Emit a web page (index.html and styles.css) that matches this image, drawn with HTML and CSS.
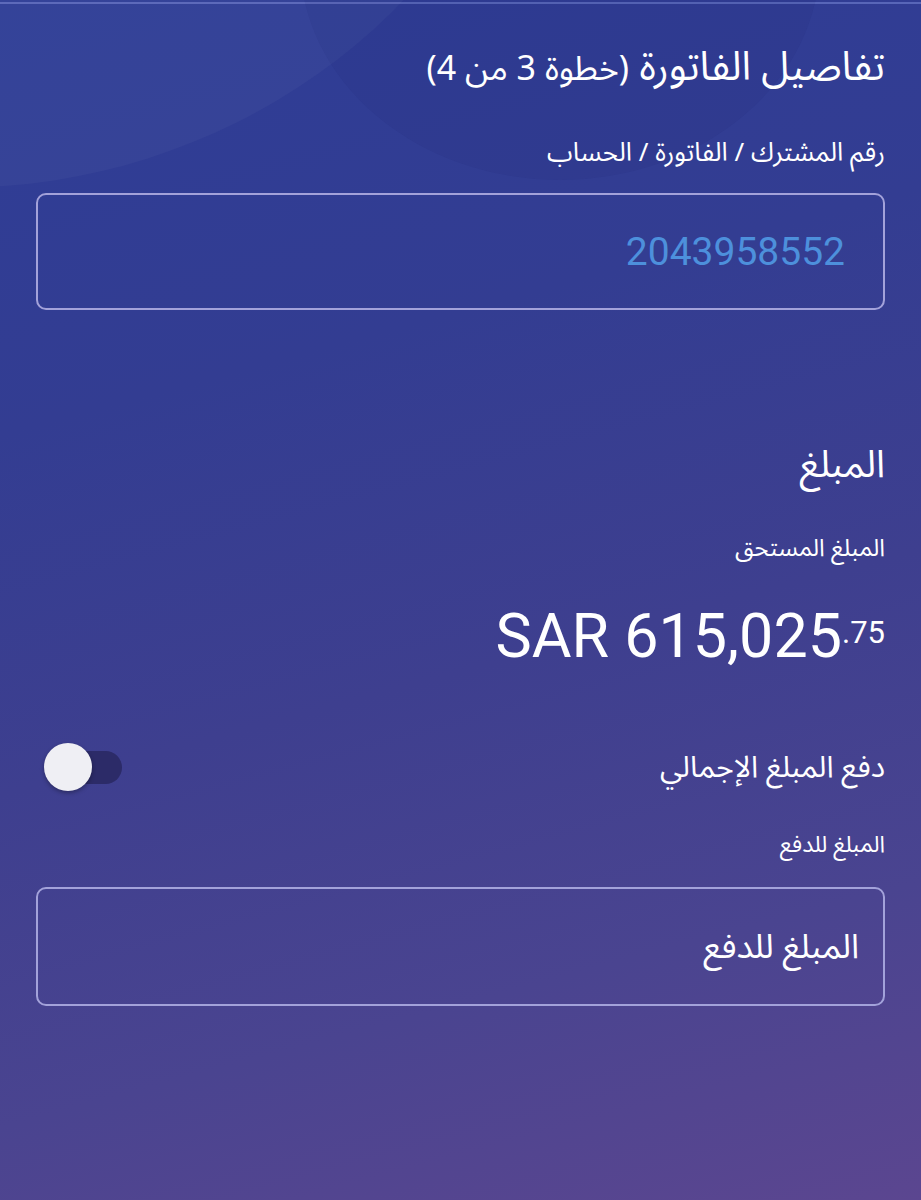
FILE: index.html
```html
<!DOCTYPE html>
<html lang="ar" dir="rtl">
<head>
<meta charset="utf-8">
<link rel="stylesheet" href="styles.css">
</head>
<body>
<div class="screen">
  <div class="topline"></div>
  <div class="glow"></div>
  <div class="glow2"></div>
  <main class="content">
    <h1 class="title">تفاصيل الفاتورة <span class="step">(خطوة 3 من 4)</span></h1>
    <div class="label label-first">رقم المشترك / الفاتورة / الحساب</div>
    <div class="field field-account"><span class="field-value">2043958552</span></div>

    <h2 class="section">المبلغ</h2>
    <div class="label label-due">المبلغ المستحق</div>
    <div class="amount" dir="ltr"><span class="amount-main">SAR 615,025</span><span class="amount-dec">.75</span></div>

    <div class="toggle-row">
      <span class="toggle-label">دفع المبلغ الإجمالي</span>
      <span class="switch"><span class="track"></span><span class="knob"></span></span>
    </div>
    <div class="label label-pay">المبلغ للدفع</div>
    <div class="field field-pay"><span class="placeholder">المبلغ للدفع</span></div>
  </main>
</div>
</body>
</html>
```

FILE: styles.css
```css
html, body {
  margin: 0;
  padding: 0;
}
body {
  width: 921px;
  height: 1200px;
  overflow: hidden;
  font-family: "Noto Sans Arabic", "Noto Naskh Arabic", "DejaVu Sans", "Noto Sans", sans-serif;
  color: #ffffff;
}
.screen {
  position: relative;
  width: 921px;
  height: 1200px;
  overflow: hidden;
  background: linear-gradient(165deg, #2e3d96 0%, #333d92 30%, #3e3f8f 55%, #4a4490 78%, #5b4690 100%);
}
.topline {
  position: absolute;
  top: 2px;
  left: 0;
  right: 0;
  height: 2px;
  background: #5866b8;
}
.glow {
  position: absolute;
  top: -590px;
  left: -440px;
  width: 980px;
  height: 760px;
  border-radius: 50%;
  background: rgba(255, 255, 255, 0.03);
  transform: rotate(-22deg);
}
.glow2 {
  position: absolute;
  top: -260px;
  left: 300px;
  width: 520px;
  height: 440px;
  border-radius: 50%;
  background: rgba(20, 20, 90, 0.06);
}
.content {
  position: relative;
  padding: 0 36px;
  display: flex;
  flex-direction: column;
}
.content > * {
  flex-shrink: 0;
}
.title {
  margin: 43px 0 0;
  font-size: 40px;
  font-weight: 400;
  line-height: 50px;
  height: 50px;
  white-space: nowrap;
}
.step {
  font-size: 34px;
}
.label {
  font-size: 24px;
  line-height: 34px;
  height: 34px;
}
.label-first {
  margin-top: 42px;
  font-size: 26px;
  height: 36px;
  line-height: 36px;
}
.field {
  box-sizing: border-box;
  border: 2px solid #a3a2da;
  border-radius: 10px;
  display: flex;
  align-items: center;
}
.field-account {
  margin-top: 22px;
  height: 117px;
  padding: 0 38px;
}
.field-value {
  font-family: Roboto, "Liberation Sans", sans-serif;
  font-size: 39px;
  color: #4d90dc;
  direction: ltr;
}
.section {
  margin: 130px 0 0;
  font-size: 38px;
  font-weight: 400;
  line-height: 50px;
  height: 50px;
}
.label-due {
  margin-top: 42px;
}
.amount {
  margin-top: 40px;
  display: flex;
  justify-content: flex-end;
  align-items: flex-start;
  height: 61px;
}
.amount-main {
  font-family: Roboto, "Liberation Sans", sans-serif;
  font-size: 61px;
  line-height: 1;
}
.amount-dec {
  font-family: Roboto, "Liberation Sans", sans-serif;
  font-size: 31px;
  line-height: 1;
  margin-top: 11px;
}
.toggle-row {
  margin-top: 76px;
  display: flex;
  align-items: center;
  justify-content: space-between;
  height: 50px;
}
.toggle-label {
  font-size: 30px;
  line-height: 44px;
}
.switch {
  position: relative;
  width: 78px;
  height: 50px;
  margin-left: 8px;
}
.track {
  position: absolute;
  left: 14px;
  top: 8px;
  width: 64px;
  height: 33px;
  border-radius: 17px;
  background: #2c2b68;
}
.knob {
  position: absolute;
  left: 0;
  top: 0;
  width: 48px;
  height: 48px;
  border-radius: 50%;
  background: #efeff4;
  box-shadow: 0 2px 4px rgba(0, 0, 0, 0.3);
}
.label-pay {
  margin-top: 35px;
  font-size: 23px;
}
.field-pay {
  margin-top: 25px;
  height: 119px;
  padding: 0 24px;
}
.placeholder {
  font-size: 34px;
}
```
